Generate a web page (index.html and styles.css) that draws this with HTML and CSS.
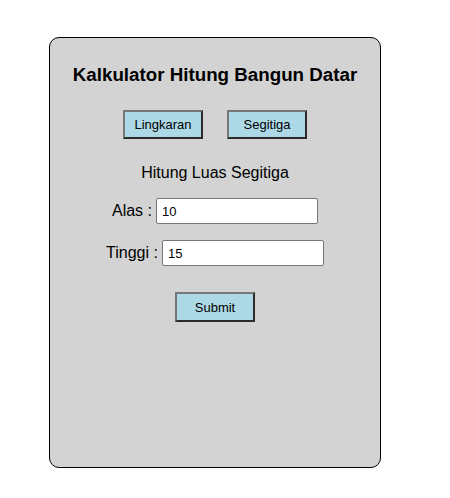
FILE: index.html
```html
<!DOCTYPE html>
<html lang="id">
<head>
<meta charset="utf-8">
<title>Kalkulator Hitung Bangun Datar</title>
<link rel="stylesheet" href="styles.css">
</head>
<body>
<div class="card">
  <h1 class="title">Kalkulator Hitung Bangun Datar</h1>
  <div class="tabs">
    <button class="btn">Lingkaran</button>
    <button class="btn">Segitiga</button>
  </div>
  <h2 class="subtitle">Hitung Luas Segitiga</h2>
  <div class="row">
    <label class="label">Alas :</label>
    <input class="field" type="text" value="10">
  </div>
  <div class="row">
    <label class="label">Tinggi :</label>
    <input class="field" type="text" value="15">
  </div>
  <div class="actions">
    <button class="btn btn-submit">Submit</button>
  </div>
</div>
</body>
</html>
```
FILE: styles.css
```css
* { box-sizing: border-box; }
html, body { margin: 0; padding: 0; background: #fff; }
body {
  font-family: "Liberation Sans", Arial, sans-serif;
  color: #000;
  padding: 37px 0 0 49px;
}
.card {
  width: 332px;
  height: 431px;
  background: #d3d3d3;
  border: 1px solid #000;
  border-radius: 10px;
  padding-top: 26px;
  display: flex;
  flex-direction: column;
  align-items: center;
}
.title {
  margin: 0;
  font-size: 18.75px;
  line-height: 22px;
  font-weight: bold;
}
.tabs {
  margin-top: 24px;
  display: flex;
  gap: 24px;
}
.btn {
  width: 80px;
  height: 29px;
  background: #add8e6;
  border-width: 2px;
  border-style: solid;
  border-color: #767676 #2b2b2b #2b2b2b #767676;
  font-family: "Liberation Sans", Arial, sans-serif;
  font-size: 13px;
  color: #000;
  padding: 0;
}
.subtitle {
  margin: 25px 0 0;
  font-size: 16px;
  line-height: 18px;
  font-weight: normal;
}
.row {
  margin-top: 16px;
  display: flex;
  align-items: center;
  gap: 4px;
}
.label {
  font-size: 16px;
  line-height: 18px;
}
.field {
  width: 162px;
  height: 26px;
  border: 1px solid #767676;
  border-radius: 2px;
  background: #fff;
  padding: 0 5px;
  font-family: "Liberation Sans", Arial, sans-serif;
  font-size: 13px;
  color: #000;
}
.actions {
  margin-top: 26px;
}
.btn-submit {
  height: 30px;
}
```
